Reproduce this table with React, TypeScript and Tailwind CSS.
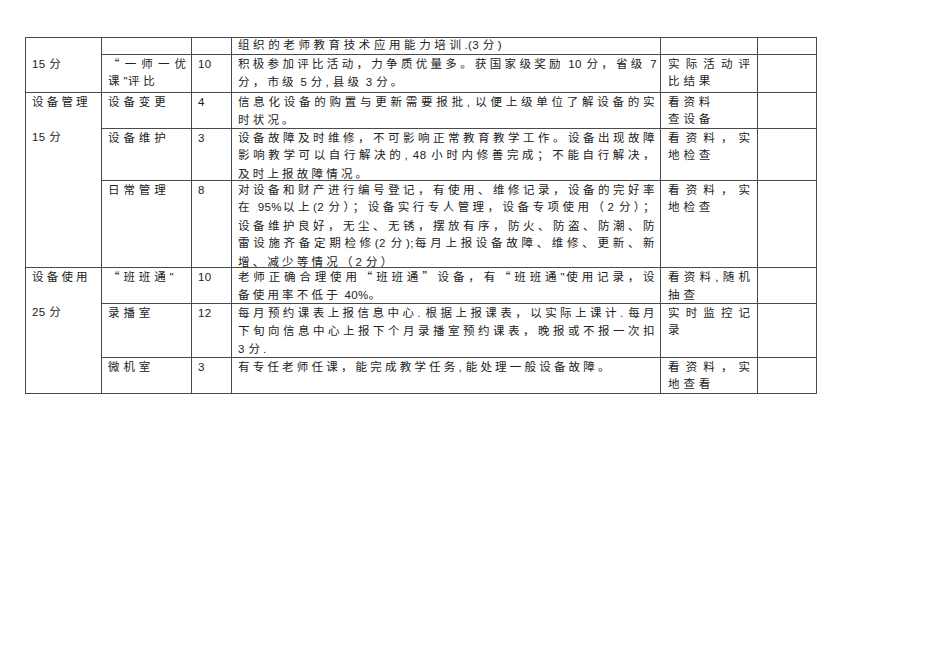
import React from "react";

const ASCII = /^[\x00-\x7F]+$/;

function T({ s }: { s: string }) {
  const parts = s.split(/([\x00-\x7F]+)/).filter((p) => p.length > 0);
  return (
    <>
      {parts.map((p, i) =>
        ASCII.test(p) ? (
          <span key={i} className="font-['Liberation_Sans',sans-serif] tracking-[0.4px]">
            {p}
          </span>
        ) : (
          <span key={i}>{p}</span>
        )
      )}
    </>
  );
}

function J({ s }: { s: string }) {
  return (
    <div className="text-justify [text-align-last:justify]">
      <T s={s} />
    </div>
  );
}

function N({ s }: { s: string }) {
  return (
    <div className="whitespace-nowrap">
      <T s={s} />
    </div>
  );
}

const cell = "border-r border-b border-[#4a4a4a] overflow-visible";
const c1 = `${cell} pl-[6px] tracking-[3.2px]`;
const c2 = `${cell} pl-[6px] pr-[1px] tracking-[3.9px]`;
const c3 = `${cell} pl-[6px]`;
const c4j = `${cell} pl-[6px] pr-[3px] tracking-[2.4px]`;
const c5 = `${cell} pl-[7px] pr-[3px] tracking-[3.9px]`;
const c6 = `${cell}`;

function D({ j, last }: { j: string[]; last?: string }) {
  return (
    <>
      {j.map((s, i) => (
        <J key={i} s={s} />
      ))}
      {last ? (
        <div className="whitespace-nowrap tracking-[3.2px]">
          <T s={last} />
        </div>
      ) : null}
    </>
  );
}

export default function App() {
  return (
    <div className="w-[950px] h-[672px] bg-white pt-[37px] pl-[25px] font-['Noto_Sans_CJK_SC',sans-serif] text-[11.5px] leading-[17.4px] text-[#222]">
      <div className="grid w-fit grid-cols-[76px_90px_40px_429px_97px_59px] grid-rows-[17px_38px_36px_52px_87px_36px_54px_36px] border-t border-l border-[#4a4a4a]">
        {/* Row 1 */}
        <div className={`${c1} row-span-2`}>
          <div>&nbsp;</div>
          <N s="15 分" />
        </div>
        <div className={c2}></div>
        <div className={c3}></div>
        <div className={`${cell} pl-[6px] pr-[3px]`}>
          <div className="-mt-[2px] whitespace-nowrap tracking-[3.6px]">
            <T s="组织的老师教育技术应用能力培训.(3 分)" />
          </div>
        </div>
        <div className={c5}></div>
        <div className={c6}></div>

        {/* Row 2 */}
        <div className={c2}>
          <J s="“一师一优" />
          <N s={'课"评比'} />
        </div>
        <div className={c3}>
          <N s="10" />
        </div>
        <div className={c4j}>
          <D j={["积极参加评比活动，力争质优量多。获国家级奖励 10 分，省级 7"]} last="分，市级 5 分, 县级 3 分。" />
        </div>
        <div className={c5}>
          <J s="实际活动评" />
          <N s="比结果" />
        </div>
        <div className={c6}></div>

        {/* Row 3 */}
        <div className={`${c1} row-span-3`}>
          <N s="设备管理" />
          <div>&nbsp;</div>
          <N s="15 分" />
        </div>
        <div className={c2}>
          <N s="设备变更" />
        </div>
        <div className={c3}>
          <N s="4" />
        </div>
        <div className={c4j}>
          <D j={["信息化设备的购置与更新需要报批, 以便上级单位了解设备的实"]} last="时状况。" />
        </div>
        <div className={c5}>
          <N s="看资料" />
          <N s="查设备" />
        </div>
        <div className={c6}></div>

        {/* Row 4 */}
        <div className={c2}>
          <N s="设备维护" />
        </div>
        <div className={c3}>
          <N s="3" />
        </div>
        <div className={c4j}>
          <D
            j={[
              "设备故障及时维修，不可影响正常教育教学工作。设备出现故障",
              "影响教学可以自行解决的, 48 小时内修善完成；不能自行解决，",
            ]}
            last="及时上报故障情况。"
          />
        </div>
        <div className={c5}>
          <J s="看资料，实" />
          <N s="地检查" />
        </div>
        <div className={c6}></div>

        {/* Row 5 */}
        <div className={c2}>
          <N s="日常管理" />
        </div>
        <div className={c3}>
          <N s="8" />
        </div>
        <div className={c4j}>
          <D
            j={[
              "对设备和财产进行编号登记，有使用、维修记录，设备的完好率",
              "在 95%以上(2 分）；设备实行专人管理，设备专项使用（2 分）；",
              "设备维护良好，无尘、无锈，摆放有序，防火、防盗、防潮、防",
              "雷设施齐备定期检修(2 分);每月上报设备故障、维修、更新、新",
            ]}
            last="增、减少等情况（2 分）"
          />
        </div>
        <div className={c5}>
          <J s="看资料，实" />
          <N s="地检查" />
        </div>
        <div className={c6}></div>

        {/* Row 6 */}
        <div className={`${c1} row-span-3`}>
          <N s="设备使用" />
          <div>&nbsp;</div>
          <N s="25 分" />
        </div>
        <div className={c2}>
          <N s={'“班班通"'} />
        </div>
        <div className={c3}>
          <N s="10" />
        </div>
        <div className={c4j}>
          <D j={['老师正确合理使用“班班通”设备，有“班班通"使用记录，设']} last="备使用率不低于 40%。" />
        </div>
        <div className={c5}>
          <J s="看资料, 随机" />
          <N s="抽查" />
        </div>
        <div className={c6}></div>

        {/* Row 7 */}
        <div className={c2}>
          <N s="录播室" />
        </div>
        <div className={c3}>
          <N s="12" />
        </div>
        <div className={c4j}>
          <D
            j={[
              "每月预约课表上报信息中心. 根据上报课表，以实际上课计. 每月",
              "下旬向信息中心上报下个月录播室预约课表，晚报或不报一次扣",
            ]}
            last="3 分."
          />
        </div>
        <div className={c5}>
          <J s="实时监控记" />
          <N s="录" />
        </div>
        <div className={c6}></div>

        {/* Row 8 */}
        <div className={c2}>
          <N s="微机室" />
        </div>
        <div className={c3}>
          <N s="3" />
        </div>
        <div className={c4j}>
          <D j={[]} last="有专任老师任课，能完成教学任务, 能处理一般设备故障。" />
        </div>
        <div className={c5}>
          <J s="看资料，实" />
          <N s="地查看" />
        </div>
        <div className={c6}></div>
      </div>
    </div>
  );
}
